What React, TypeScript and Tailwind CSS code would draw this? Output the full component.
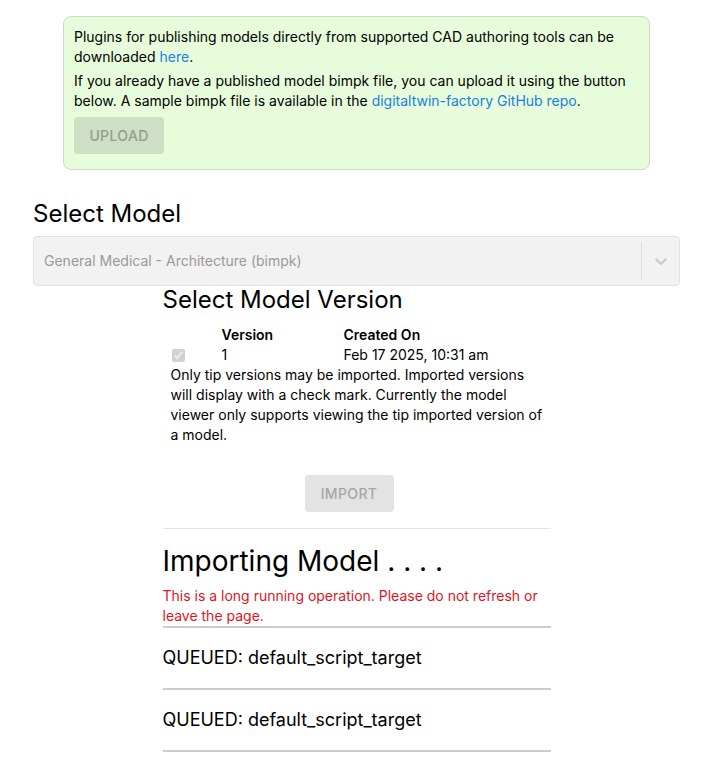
import React from 'react';

const statuses = ['QUEUED: default_script_target', 'QUEUED: default_script_target'];

export default function App() {
  return (
    <div className="min-h-screen bg-white text-black" style={{ fontFamily: 'Inter, "Noto Sans", sans-serif' }}>
      <div className="ml-[33px] w-[647px] pt-4">
        {/* Plugin info */}
        <div className="mx-auto w-[587px] rounded-lg border border-[#c9dcc0] bg-[#e6fcda] px-[10px] pt-[10px] pb-[15px] text-sm leading-5">
          <p>
            Plugins for publishing models directly from supported CAD authoring tools can be downloaded{' '}
            <a className="text-[#1a7fe0]">here</a>.
          </p>
          <p className="mt-1">
            If you already have a published model bimpk file, you can upload it using the button below. A sample bimpk
            file is available in the <a className="text-[#1a7fe0]">digitaltwin-factory GitHub repo</a>.
          </p>
          <button
            disabled
            className="mt-[6px] h-[37px] w-[90px] rounded bg-[#cfdfc5] text-sm font-medium tracking-wide text-[#8fa089]"
          >
            UPLOAD
          </button>
        </div>

        {/* Select model */}
        <h2 className="mt-[29px] text-2xl leading-[30px]">Select Model</h2>
        <div className="mt-[7px] flex h-[50px] items-center rounded border border-[#e2e2e2] bg-[#f2f2f2]">
          <span className="flex-1 pl-[10px] text-sm text-[#999999]">General Medical - Architecture (bimpk)</span>
          <span className="h-[38px] w-px bg-[#dddddd]" />
          <span className="flex w-[37px] justify-center text-[#cccccc]">
            <svg width="20" height="20" viewBox="0 0 20 20" fill="currentColor">
              <path d="M4.516 7.548c0.436-0.446 1.043-0.481 1.576 0l3.908 3.747 3.908-3.747c0.533-0.481 1.141-0.446 1.574 0 0.436 0.445 0.408 1.197 0 1.615-0.406 0.418-4.695 4.502-4.695 4.502-0.217 0.223-0.502 0.335-0.787 0.335s-0.57-0.112-0.789-0.335c0 0-4.287-4.084-4.695-4.502s-0.436-1.17 0-1.615z" />
            </svg>
          </span>
        </div>

        {/* Version */}
        <div className="mx-auto w-[388px]">
          <h2 className="mt-[-1px] text-2xl leading-[30px]">Select Model Version</h2>
          <div className="px-2 pt-[10px] text-sm">
            <table className="border-collapse text-left">
              <thead>
                <tr className="h-5">
                  <th className="w-[51px]" />
                  <th className="w-[122px] font-semibold">Version</th>
                  <th className="font-semibold">Created On</th>
                </tr>
              </thead>
              <tbody>
                <tr className="h-5">
                  <td className="align-middle">
                    <input type="checkbox" disabled checked readOnly className="m-0 ml-[1px] block h-[13px] w-[13px]" />
                  </td>
                  <td>1</td>
                  <td>Feb 17 2025, 10:31 am</td>
                </tr>
              </tbody>
            </table>
            <p className="leading-5">
              Only tip versions may be imported. Imported versions will display with a check mark. Currently the model
              viewer only supports viewing the tip imported version of a model.
            </p>
          </div>
          <button
            disabled
            className="ml-[142px] mt-[30px] h-[37px] w-[89px] rounded bg-[#e3e3e3] text-sm font-medium tracking-wide text-[#a6a6a6]"
          >
            IMPORT
          </button>
          <div className="mt-[16px] h-px bg-[#e5e5e5]" />

          {/* Import progress */}
          <h2 className="mt-[14px] text-[28px] leading-[36px]">Importing Model . . . .</h2>
          <p className="mt-[7px] text-sm leading-5 text-[#e0141e]">
            This is a long running operation. Please do not refresh or leave the page.
          </p>
          {statuses.map((s, i) => (
            <div key={i} className="border-t-2 border-[#cccccc] py-[19px] text-lg leading-[22px] last:border-b-2">
              {s}
            </div>
          ))}
        </div>
      </div>
    </div>
  );
}
